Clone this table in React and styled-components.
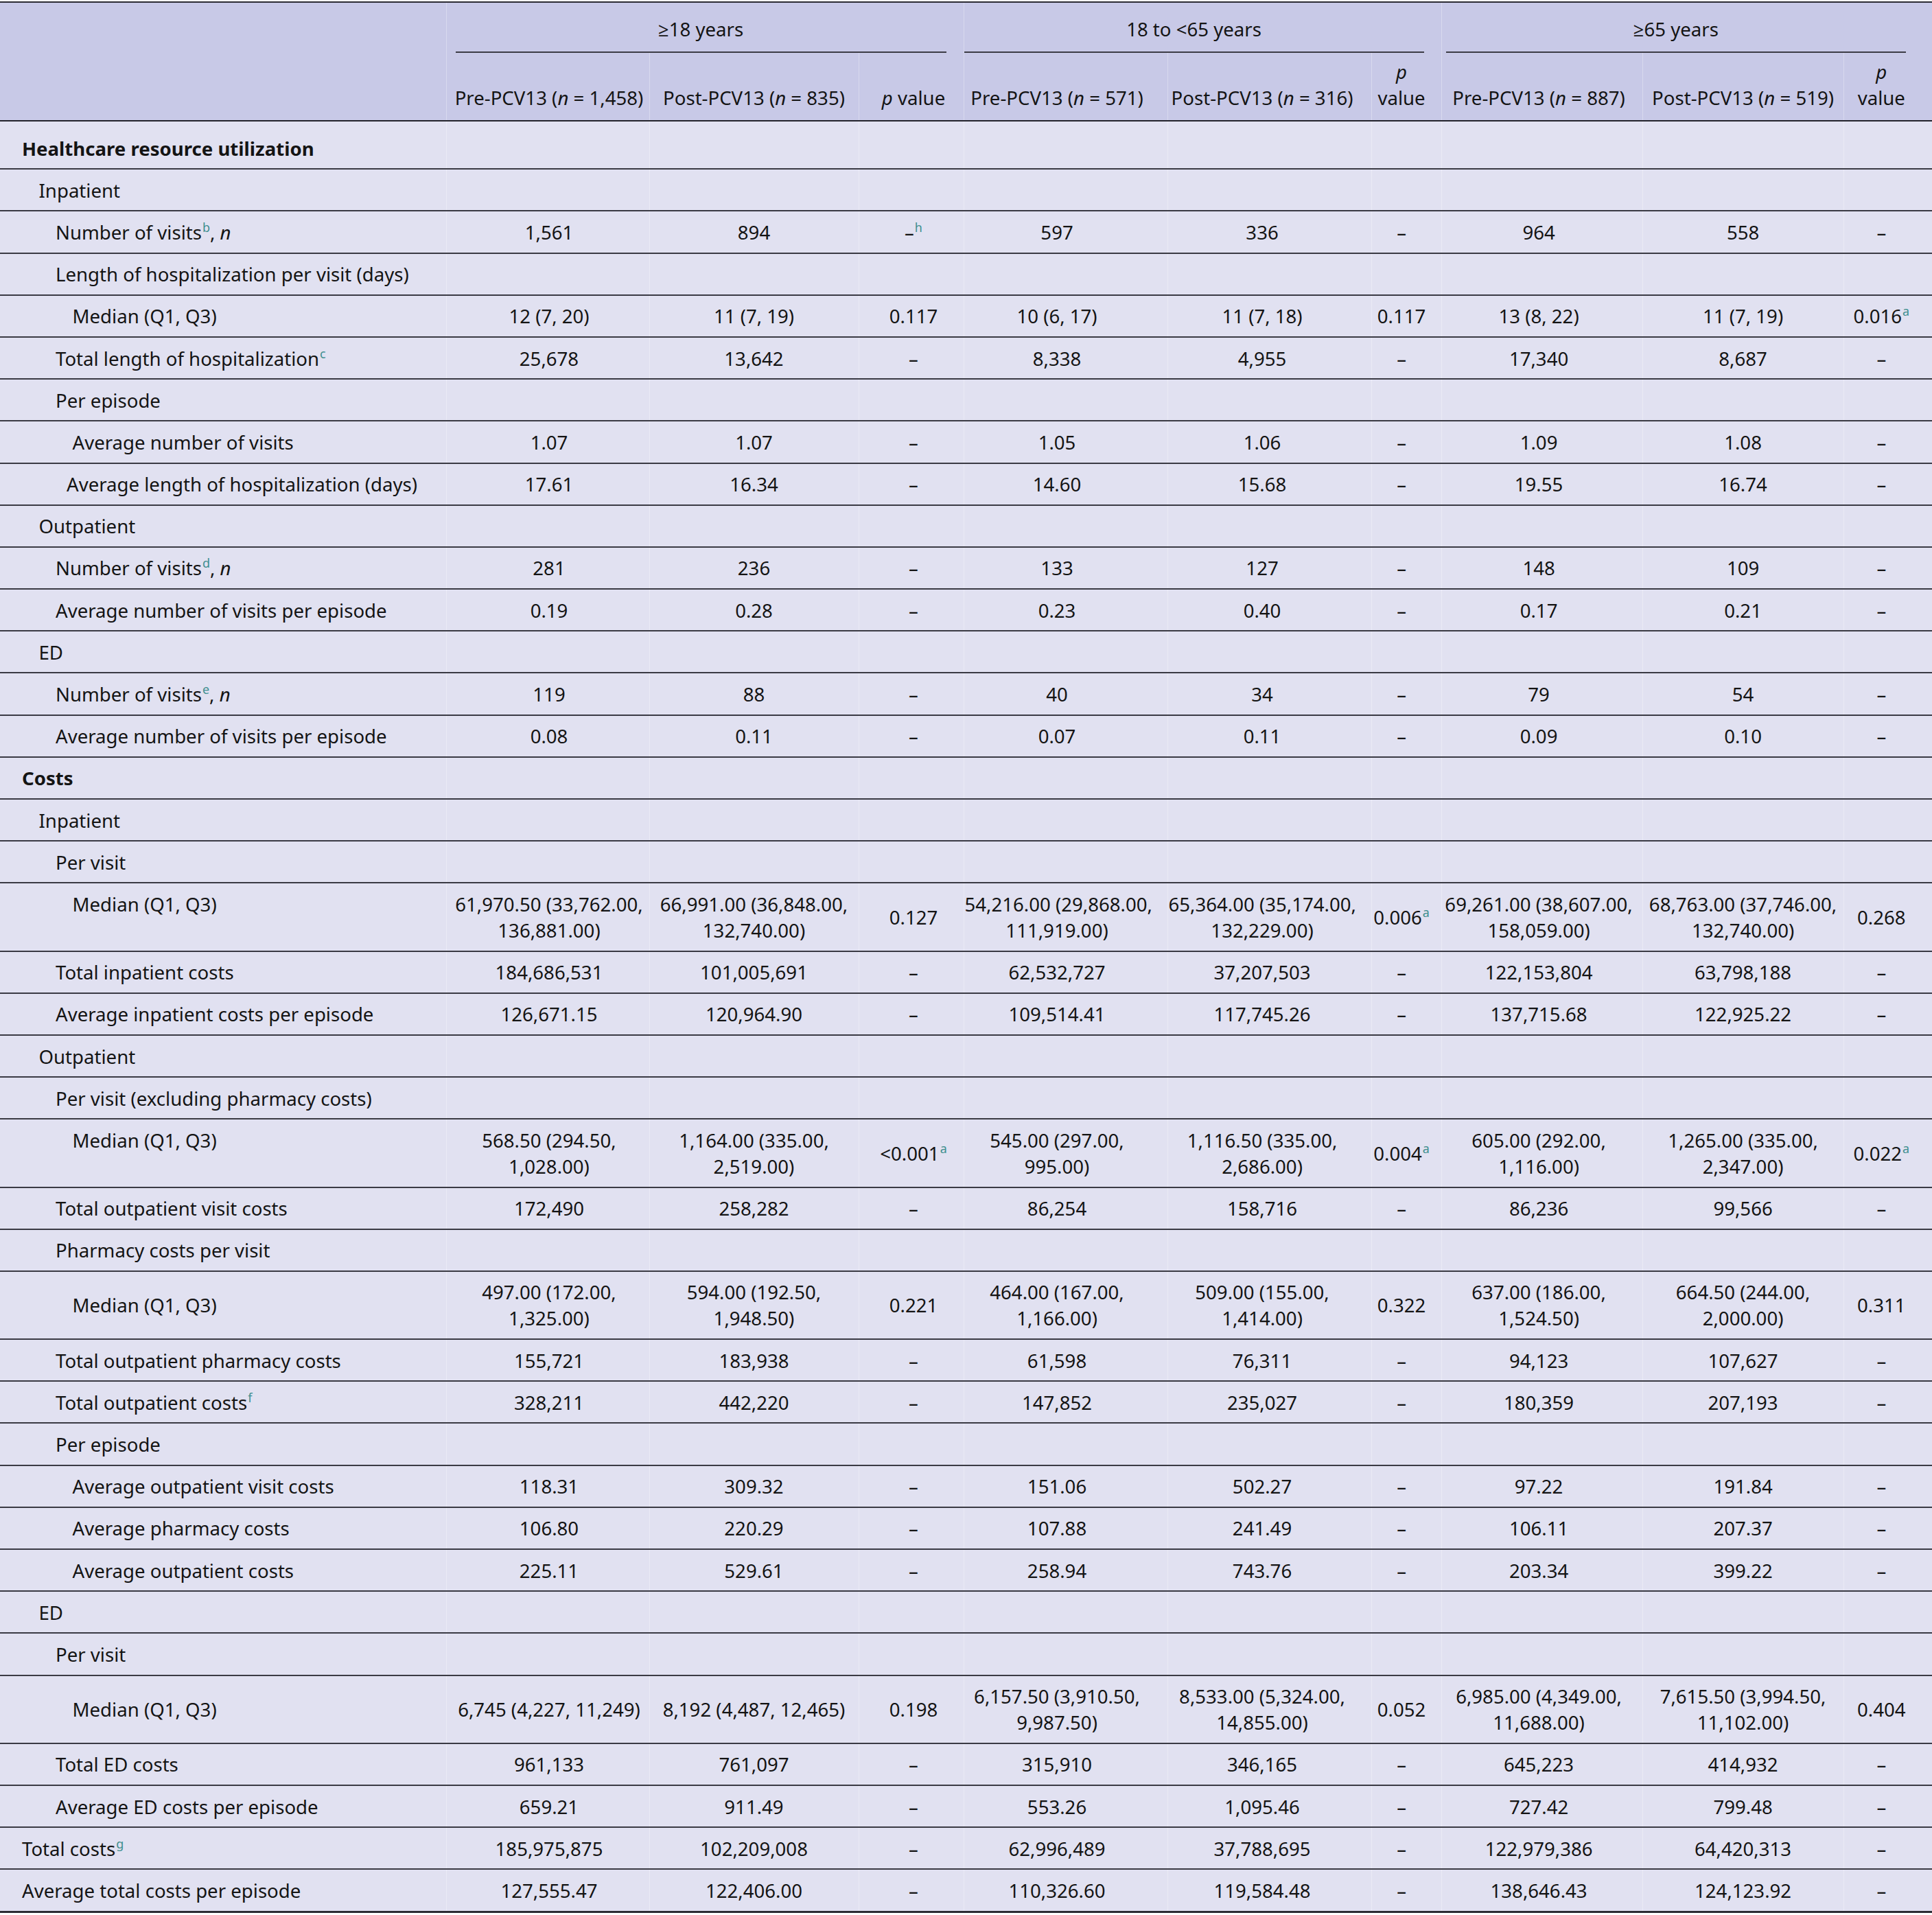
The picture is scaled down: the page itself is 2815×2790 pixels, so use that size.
import React from 'react';
import styled, { createGlobalStyle } from 'styled-components';

const GlobalStyle = createGlobalStyle`
  body {
    margin: 0;
    padding-top: 2px;
    background: #ffffff;
    font-family: "Noto Sans", "Open Sans", sans-serif;
  }
`;

const WIDTHS = [650, 296, 305, 153, 297, 297, 102, 293, 293, 129];
// left / right padding of each data column, so the centred text sits where the reference has it
const PADS = [
  [5, 1], [3, 3], [8, 1],
  [1, 26], [1, 22], [1, 15],
  [1, 10], [3, 3], [1, 20],
];

const Table = styled.table`
  width: 2815px;
  table-layout: fixed;
  border-collapse: collapse;
  font-size: 27.6px;
  line-height: 38px;
  color: #141414;
  border-top: 2px solid #2b2b33;
  border-bottom: 3px solid #2b2b33;
`;

const Col = styled.col`
  width: ${p => p.$w}px;
`;

const HeadRow = styled.tr`
  background: #c8c9e7;
`;

const SubHeadRow = styled.tr`
  background: #c8c9e7;
  height: 99px;
  border-bottom: 2px solid #23232b;
`;

const Corner = styled.th`
  font-weight: normal;
`;

const GroupCell = styled.th`
  padding: 19px 0 0 0;
  font-weight: normal;
  vertical-align: top;
  border-left: 1px solid rgba(255, 255, 255, 0.3);
`;

const GroupLabel = styled.div`
  margin: 0 ${p => p.$mr}px 0 ${p => p.$ml}px;
  padding-bottom: 14px;
  border-bottom: 2px solid #3c3c46;
  text-align: center;
  white-space: nowrap;
`;

const SubHead = styled.th`
  font-weight: normal;
  vertical-align: bottom;
  text-align: center;
  padding: 0 ${p => p.$pr}px 14px ${p => p.$pl}px;
  white-space: nowrap;
  border-left: 1px solid rgba(255, 255, 255, 0.3);
`;

const Row = styled.tr`
  background: #e1e1f1;
  border-bottom: 2px solid #3a3a44;
`;

const Label = styled.td`
  padding: ${p => (p.$first ? '19.6px' : '10.6px')} 6px 10.6px ${p => p.$indent}px;
  vertical-align: ${p => (p.$mid ? 'middle' : 'top')};
  font-weight: ${p => (p.$bold ? 700 : 400)};
  white-space: nowrap;
`;

const Cell = styled.td`
  padding: 10.6px ${p => p.$pr}px 10.6px ${p => p.$pl}px;
  text-align: center;
  vertical-align: middle;
  white-space: nowrap;
  border-left: 1px solid rgba(255, 255, 255, 0.3);
`;

const Line = styled.span`
  display: block;
`;

const Sup = styled.sup`
  color: #3f8f8f;
  font-size: 18px;
  line-height: 0;
  vertical-align: 11px;
  margin-left: 1px;
`;

const Em = styled.i`
  font-style: italic;
`;

const D = '–';

const note = (p, s) => ({ p, s });

const rows = [
  { label: 'Healthcare resource utilization', level: 0, bold: true, first: true },
  { label: 'Inpatient', level: 1 },
  { label: 'Number of visits', sup: 'b', n: true, level: 2, v: ['1,561', '894', note(D, 'h'), '597', '336', D, '964', '558', D] },
  { label: 'Length of hospitalization per visit (days)', level: 2 },
  { label: 'Median (Q1, Q3)', level: 3, v: ['12 (7, 20)', '11 (7, 19)', '0.117', '10 (6, 17)', '11 (7, 18)', '0.117', '13 (8, 22)', '11 (7, 19)', note('0.016', 'a')] },
  { label: 'Total length of hospitalization', sup: 'c', level: 2, v: ['25,678', '13,642', D, '8,338', '4,955', D, '17,340', '8,687', D] },
  { label: 'Per episode', level: 2 },
  { label: 'Average number of visits', level: 3, v: ['1.07', '1.07', D, '1.05', '1.06', D, '1.09', '1.08', D] },
  { label: 'Average length of hospitalization (days)', level: 3, indent: 97, v: ['17.61', '16.34', D, '14.60', '15.68', D, '19.55', '16.74', D] },
  { label: 'Outpatient', level: 1 },
  { label: 'Number of visits', sup: 'd', n: true, level: 2, v: ['281', '236', D, '133', '127', D, '148', '109', D] },
  { label: 'Average number of visits per episode', level: 2, v: ['0.19', '0.28', D, '0.23', '0.40', D, '0.17', '0.21', D] },
  { label: 'ED', level: 1 },
  { label: 'Number of visits', sup: 'e', n: true, level: 2, v: ['119', '88', D, '40', '34', D, '79', '54', D] },
  { label: 'Average number of visits per episode', level: 2, v: ['0.08', '0.11', D, '0.07', '0.11', D, '0.09', '0.10', D] },
  { label: 'Costs', level: 0, bold: true },
  { label: 'Inpatient', level: 1 },
  { label: 'Per visit', level: 2 },
  {
    label: 'Median (Q1, Q3)', level: 3,
    v: [
      ['61,970.50 (33,762.00,', '136,881.00)'], ['66,991.00 (36,848.00,', '132,740.00)'], '0.127',
      ['54,216.00 (29,868.00,', '111,919.00)'], ['65,364.00 (35,174.00,', '132,229.00)'], note('0.006', 'a'),
      ['69,261.00 (38,607.00,', '158,059.00)'], ['68,763.00 (37,746.00,', '132,740.00)'], '0.268',
    ],
  },
  { label: 'Total inpatient costs', level: 2, v: ['184,686,531', '101,005,691', D, '62,532,727', '37,207,503', D, '122,153,804', '63,798,188', D] },
  { label: 'Average inpatient costs per episode', level: 2, v: ['126,671.15', '120,964.90', D, '109,514.41', '117,745.26', D, '137,715.68', '122,925.22', D] },
  { label: 'Outpatient', level: 1 },
  { label: 'Per visit (excluding pharmacy costs)', level: 2 },
  {
    label: 'Median (Q1, Q3)', level: 3,
    v: [
      ['568.50 (294.50,', '1,028.00)'], ['1,164.00 (335.00,', '2,519.00)'], note('<0.001', 'a'),
      ['545.00 (297.00,', '995.00)'], ['1,116.50 (335.00,', '2,686.00)'], note('0.004', 'a'),
      ['605.00 (292.00,', '1,116.00)'], ['1,265.00 (335.00,', '2,347.00)'], note('0.022', 'a'),
    ],
  },
  { label: 'Total outpatient visit costs', level: 2, v: ['172,490', '258,282', D, '86,254', '158,716', D, '86,236', '99,566', D] },
  { label: 'Pharmacy costs per visit', level: 2 },
  {
    label: 'Median (Q1, Q3)', level: 3, mid: true,
    v: [
      ['497.00 (172.00,', '1,325.00)'], ['594.00 (192.50,', '1,948.50)'], '0.221',
      ['464.00 (167.00,', '1,166.00)'], ['509.00 (155.00,', '1,414.00)'], '0.322',
      ['637.00 (186.00,', '1,524.50)'], ['664.50 (244.00,', '2,000.00)'], '0.311',
    ],
  },
  { label: 'Total outpatient pharmacy costs', level: 2, v: ['155,721', '183,938', D, '61,598', '76,311', D, '94,123', '107,627', D] },
  { label: 'Total outpatient costs', sup: 'f', level: 2, v: ['328,211', '442,220', D, '147,852', '235,027', D, '180,359', '207,193', D] },
  { label: 'Per episode', level: 2 },
  { label: 'Average outpatient visit costs', level: 3, v: ['118.31', '309.32', D, '151.06', '502.27', D, '97.22', '191.84', D] },
  { label: 'Average pharmacy costs', level: 3, v: ['106.80', '220.29', D, '107.88', '241.49', D, '106.11', '207.37', D] },
  { label: 'Average outpatient costs', level: 3, v: ['225.11', '529.61', D, '258.94', '743.76', D, '203.34', '399.22', D] },
  { label: 'ED', level: 1 },
  { label: 'Per visit', level: 2 },
  {
    label: 'Median (Q1, Q3)', level: 3, mid: true,
    v: [
      '6,745 (4,227, 11,249)', '8,192 (4,487, 12,465)', '0.198',
      ['6,157.50 (3,910.50,', '9,987.50)'], ['8,533.00 (5,324.00,', '14,855.00)'], '0.052',
      ['6,985.00 (4,349.00,', '11,688.00)'], ['7,615.50 (3,994.50,', '11,102.00)'], '0.404',
    ],
  },
  { label: 'Total ED costs', level: 2, v: ['961,133', '761,097', D, '315,910', '346,165', D, '645,223', '414,932', D] },
  { label: 'Average ED costs per episode', level: 2, v: ['659.21', '911.49', D, '553.26', '1,095.46', D, '727.42', '799.48', D] },
  { label: 'Total costs', sup: 'g', level: 0, v: ['185,975,875', '102,209,008', D, '62,996,489', '37,788,695', D, '122,979,386', '64,420,313', D] },
  { label: 'Average total costs per episode', level: 0, v: ['127,555.47', '122,406.00', D, '110,326.60', '119,584.48', D, '138,646.43', '124,123.92', D] },
];

function Value({ v }) {
  if (!v) return null;
  if (Array.isArray(v)) {
    return (
      <>
        <Line>{v[0]}</Line>
        <Line>{v[1]}</Line>
      </>
    );
  }
  if (typeof v === 'object') {
    return (
      <>
        {v.p}
        <Sup>{v.s}</Sup>
      </>
    );
  }
  return v;
}

function Pre({ n }) {
  return (
    <>
      Pre-PCV13 (<Em>n</Em> = {n})
    </>
  );
}

function Post({ n }) {
  return (
    <>
      Post-PCV13 (<Em>n</Em> = {n})
    </>
  );
}

const subHeads = [
  <Pre n="1,458" />, <Post n="835" />, <><Em>p</Em> value</>,
  <Pre n="571" />, <Post n="316" />, <><Em>p</Em><br />value</>,
  <Pre n="887" />, <Post n="519" />, <><Em>p</Em><br />value</>,
];

export default function App() {
  return (
    <>
      <GlobalStyle />
      <Table>
        <colgroup>
          {WIDTHS.map((w, i) => (
            <Col key={i} $w={w} />
          ))}
        </colgroup>
        <thead>
          <HeadRow>
            <Corner rowSpan={2} />
            <GroupCell colSpan={3}>
              <GroupLabel $ml={13} $mr={25}>≥18 years</GroupLabel>
            </GroupCell>
            <GroupCell colSpan={3}>
              <GroupLabel $ml={0} $mr={25}>18 to &lt;65 years</GroupLabel>
            </GroupCell>
            <GroupCell colSpan={3}>
              <GroupLabel $ml={6} $mr={38}>≥65 years</GroupLabel>
            </GroupCell>
          </HeadRow>
          <SubHeadRow>
            {subHeads.map((h, j) => (
              <SubHead key={j} $pl={PADS[j][0]} $pr={PADS[j][1]}>
                {h}
              </SubHead>
            ))}
          </SubHeadRow>
        </thead>
        <tbody>
          {rows.map((r, i) => (
            <Row key={i}>
              <Label
                $indent={r.indent || 32 + r.level * 24.5}
                $bold={r.bold}
                $first={r.first}
                $mid={r.mid}
              >
                {r.label}
                {r.sup && <Sup>{r.sup}</Sup>}
                {r.n && (
                  <>
                    , <Em>n</Em>
                  </>
                )}
              </Label>
              {PADS.map((pad, j) => (
                <Cell key={j} $pl={pad[0]} $pr={pad[1]}>
                  <Value v={r.v ? r.v[j] : null} />
                </Cell>
              ))}
            </Row>
          ))}
        </tbody>
      </Table>
    </>
  );
}
